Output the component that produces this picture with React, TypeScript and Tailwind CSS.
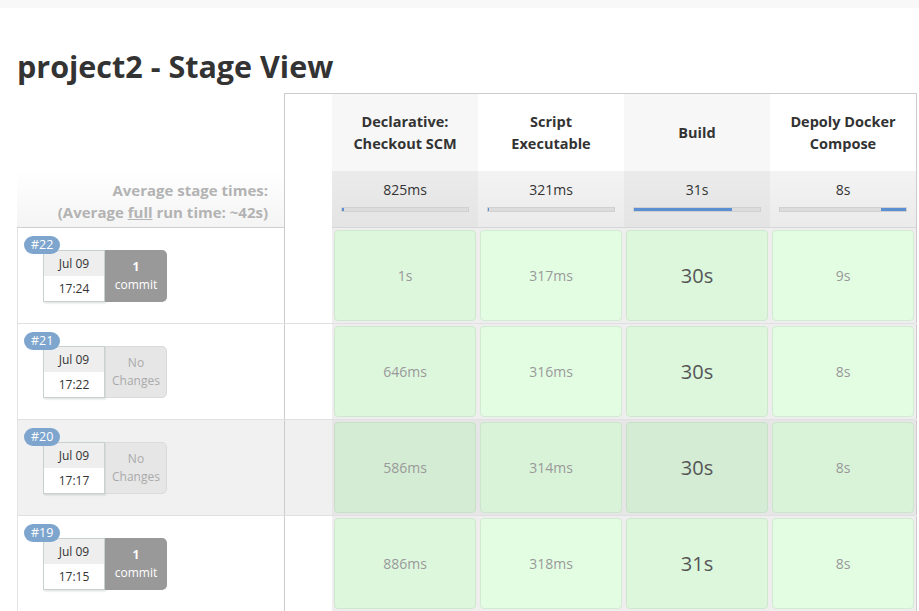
import React from 'react';

type Build = {
  id: number;
  time: string;
  commits: number;
  cells: string[];
  hover?: boolean;
};

const stages = [
  ['Declarative:', 'Checkout SCM'],
  ['Script', 'Executable'],
  ['Build'],
  ['Depoly Docker', 'Compose'],
];

const averages = [
  { label: '825ms', fill: 'w-[2px]', right: false },
  { label: '321ms', fill: 'w-[1px]', right: false },
  { label: '31s', fill: 'w-[78%]', right: false },
  { label: '8s', fill: 'w-[20%]', right: true },
];

const builds: Build[] = [
  { id: 22, time: '17:24', commits: 1, cells: ['1s', '317ms', '30s', '9s'] },
  { id: 21, time: '17:22', commits: 0, cells: ['646ms', '316ms', '30s', '8s'] },
  { id: 20, time: '17:17', commits: 0, cells: ['586ms', '314ms', '30s', '8s'], hover: true },
  { id: 19, time: '17:15', commits: 1, cells: ['886ms', '318ms', '31s', '8s'] },
];

function StageCell({ text, col, hover }: { text: string; col: number; hover?: boolean }) {
  const odd = col % 2 === 0;
  const big = col === 2;
  const bg = hover
    ? odd ? 'bg-[#d4ecd4] border-[#c8e0c8]' : 'bg-[#d9f3d9] border-[#cde4cd]'
    : odd ? 'bg-[#ddf7dd] border-[#cfe7cf]' : 'bg-[#e3fde3] border-[#d3ead3]';
  return (
    <div className={`w-[146px] shrink-0 p-[2px] ${hover ? 'bg-[#e6e6e6]' : 'bg-[#eeeeee]'}`}>
      <div className={`flex h-full items-center justify-center rounded-[4px] border ${bg}`}>
        <span className={big ? 'text-[20px] text-[#555]' : 'text-[14px] text-[#999]'}>{text}</span>
      </div>
    </div>
  );
}

function BuildInfo({ b }: { b: Build }) {
  return (
    <div className={`relative h-full w-[267px] shrink-0 border-l border-[#e4e4e4] ${b.hover ? 'bg-[#f1f1f1]' : 'bg-white'}`}>
      <div className="absolute left-[6px] top-[8px] z-10 rounded-full bg-[#7ea5ce] px-[7px] text-[12.5px] leading-[18px] text-white">
        #{b.id}
      </div>
      <div className="ml-[25px] mt-[22px] flex">
        <div className="w-[62px] border border-[#c5d3cc] bg-white text-center text-[12px] text-[#333] shadow-[1px_1px_2px_rgba(0,0,0,0.15)]">
          <div className="bg-[#eeeeee] leading-[25px]">Jul 09</div>
          <div className="leading-[25px]">{b.time}</div>
        </div>
        {b.commits > 0 ? (
          <div className="flex w-[62px] flex-col items-center justify-center rounded-r-[5px] bg-[#999] text-[12px] leading-[18px] text-white">
            <span className="font-bold">{b.commits}</span>
            <span>commit</span>
          </div>
        ) : (
          <div className="flex w-[62px] flex-col items-center justify-center rounded-r-[5px] border border-[#dadada] bg-[#e6e6e6] text-[12px] leading-[18px] text-[#aaa]">
            <span>No</span>
            <span>Changes</span>
          </div>
        )}
      </div>
    </div>
  );
}

export default function App() {
  return (
    <div className="min-h-[611px] bg-white font-['Open_Sans','Noto_Sans',sans-serif] text-[#333]">
      <div className="h-[8px] bg-[#f8f8f8]" />
      <h1 className="ml-[17px] mt-[39px] text-[30.5px] font-bold leading-[38px] text-[#333]">
        project2 - Stage View
      </h1>

      <div className="ml-[17px] mt-[8px] w-[899px]">
        {/* header */}
        <div className="flex h-[78px]">
          <div className="w-[267px] shrink-0" />
          <div className="flex border-l border-t border-r border-[#ccc]">
            <div className="w-[47px] shrink-0 bg-white" />
            {stages.map((s, i) => (
              <div
                key={i}
                className={`flex w-[146px] shrink-0 flex-col items-center justify-center text-center text-[14.5px] font-bold leading-[22px] text-[#333] ${i % 2 === 0 ? 'bg-[#f7f7f7]' : 'bg-white'}`}
              >
                {s.map((l) => (
                  <span key={l}>{l}</span>
                ))}
              </div>
            ))}
          </div>
        </div>

        {/* averages */}
        <div className="flex h-[57px]">
          <div className="flex w-[267px] shrink-0 flex-col items-end justify-end border-b border-[#d0d0d0] bg-gradient-to-b from-white to-[#f4f4f4] pb-[4px] pr-[16px] text-[15px] font-bold leading-[22px] text-[#b3b3b3]">
            <span>Average stage times:</span>
            <span>
              (Average <span className="underline">full</span> run time: ~42s)
            </span>
          </div>
          <div className="flex border-x border-[#ccc]">
            <div className="w-[47px] shrink-0 bg-white" />
            {averages.map((a, i) => (
              <div
                key={i}
                className={`flex w-[146px] shrink-0 flex-col items-center border-b border-[#d6d6d6] pt-[9px] ${i % 2 === 0 ? 'bg-gradient-to-b from-[#ebebeb] to-[#e4e4e4]' : 'bg-gradient-to-b from-[#f3f3f3] to-[#ebebeb]'}`}
              >
                <span className="text-[14px] leading-[20px] text-[#333]">{a.label}</span>
                <div className={`mt-[7px] flex h-[5px] w-[128px] border border-[#d0d0d0] bg-[#dcdcdc] ${a.right ? 'justify-end' : ''}`}>
                  <div className={`h-full bg-[#5b8fd1] ${a.fill}`} />
                </div>
              </div>
            ))}
          </div>
        </div>

        {/* builds */}
        {builds.map((b) => (
          <div key={b.id} className="flex h-[96px] border-b border-[#e0e0e0]">
            <BuildInfo b={b} />
            <div className="flex border-x border-[#ccc]">
              <div className={`w-[47px] shrink-0 ${b.hover ? 'bg-[#f0f0f0]' : 'bg-white'}`} />
              {b.cells.map((c, i) => (
                <StageCell key={i} text={c} col={i} hover={b.hover} />
              ))}
            </div>
          </div>
        ))}
      </div>
    </div>
  );
}
